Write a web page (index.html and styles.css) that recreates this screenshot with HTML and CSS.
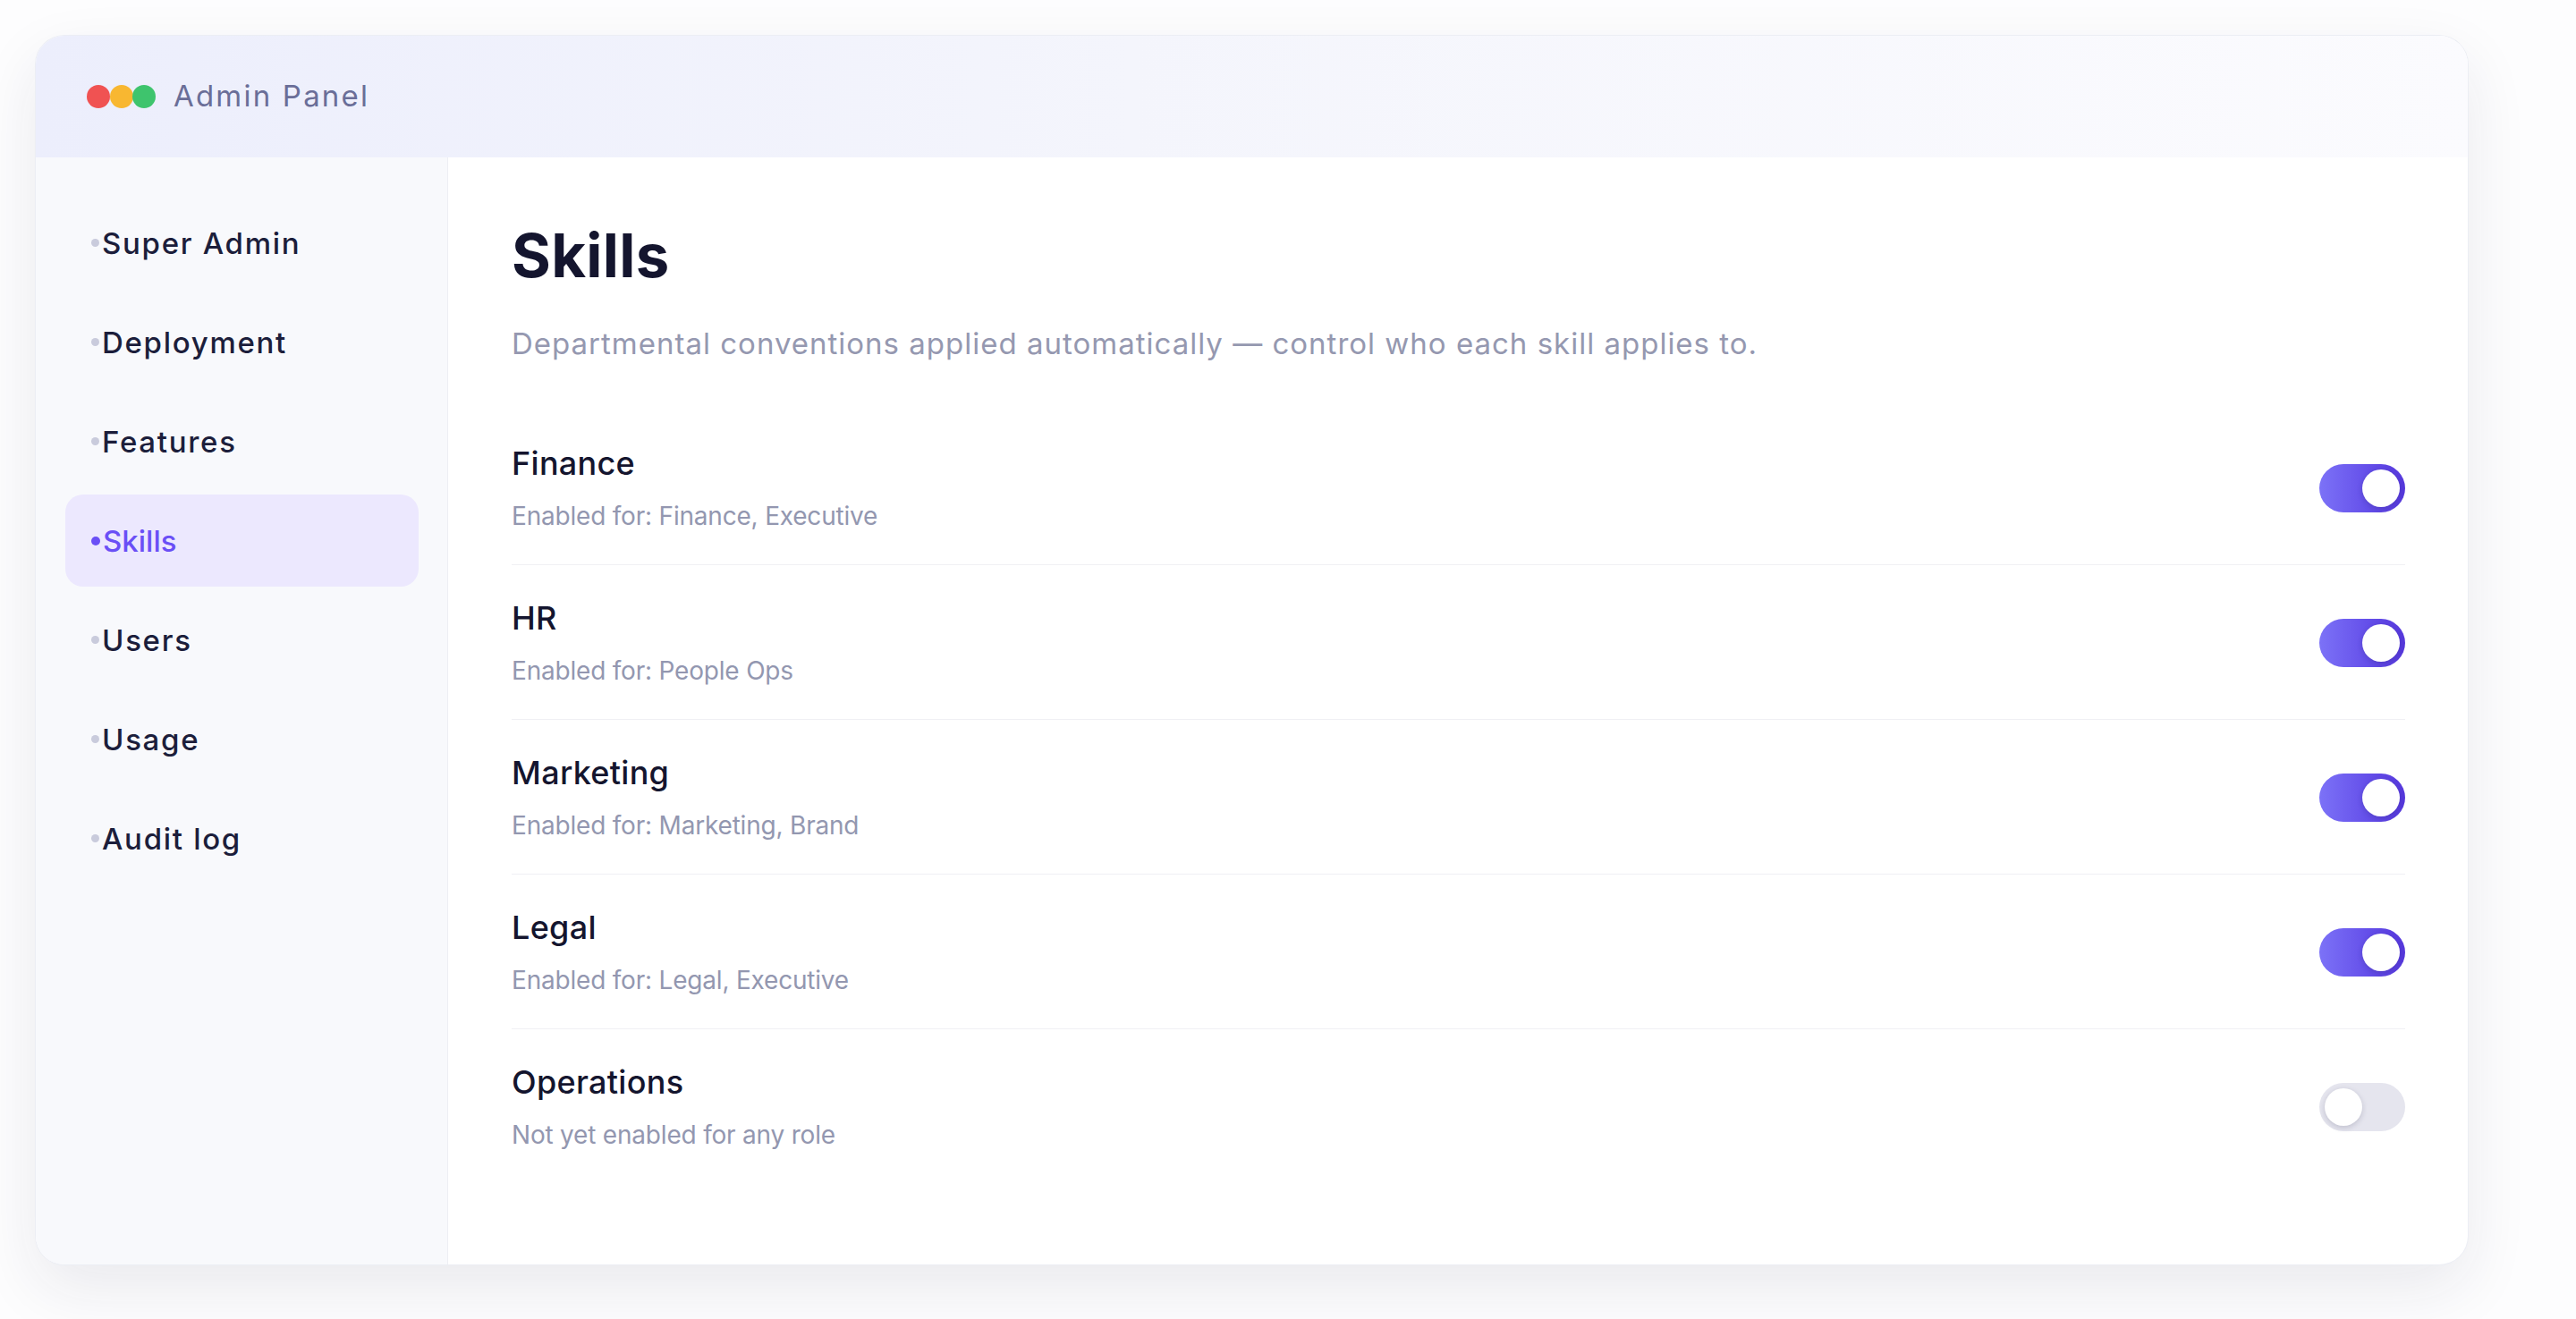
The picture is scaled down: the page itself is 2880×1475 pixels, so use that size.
FILE: index.html
```html
<!DOCTYPE html>
<html lang="en">
<head>
<meta charset="utf-8">
<title>Admin Panel – Skills</title>
<link rel="stylesheet" href="styles.css">
</head>
<body>
<div class="window">
  <header class="titlebar">
    <div class="lights">
      <span class="light red"></span>
      <span class="light yellow"></span>
      <span class="light green"></span>
    </div>
    <div class="app-name">Admin Panel</div>
  </header>
  <div class="body">
    <nav class="sidebar">
      <a class="nav-item"><span class="bullet"></span>Super Admin</a>
      <a class="nav-item"><span class="bullet"></span>Deployment</a>
      <a class="nav-item"><span class="bullet"></span>Features</a>
      <a class="nav-item active"><span class="bullet"></span>Skills</a>
      <a class="nav-item"><span class="bullet"></span>Users</a>
      <a class="nav-item"><span class="bullet"></span>Usage</a>
      <a class="nav-item"><span class="bullet"></span>Audit log</a>
    </nav>
    <main class="content">
      <h1 class="title">Skills</h1>
      <p class="subtitle">Departmental conventions applied automatically — control who each skill applies to.</p>
      <ul class="skills">
        <li class="skill">
          <div class="skill-text">
            <div class="skill-name">Finance</div>
            <div class="skill-desc">Enabled for: Finance, Executive</div>
          </div>
          <span class="toggle on"><span class="knob"></span></span>
        </li>
        <li class="skill">
          <div class="skill-text">
            <div class="skill-name">HR</div>
            <div class="skill-desc">Enabled for: People Ops</div>
          </div>
          <span class="toggle on"><span class="knob"></span></span>
        </li>
        <li class="skill">
          <div class="skill-text">
            <div class="skill-name">Marketing</div>
            <div class="skill-desc">Enabled for: Marketing, Brand</div>
          </div>
          <span class="toggle on"><span class="knob"></span></span>
        </li>
        <li class="skill">
          <div class="skill-text">
            <div class="skill-name">Legal</div>
            <div class="skill-desc">Enabled for: Legal, Executive</div>
          </div>
          <span class="toggle on"><span class="knob"></span></span>
        </li>
        <li class="skill">
          <div class="skill-text">
            <div class="skill-name">Operations</div>
            <div class="skill-desc">Not yet enabled for any role</div>
          </div>
          <span class="toggle off"><span class="knob"></span></span>
        </li>
      </ul>
    </main>
  </div>
</div>
</body>
</html>
```

FILE: styles.css
```css
* { box-sizing: border-box; }

html, body {
  margin: 0;
  padding: 0;
}

body {
  background: #fdfdfe;
  font-family: Inter, "Noto Sans", "Liberation Sans", sans-serif;
  width: 2880px;
  height: 1475px;
  overflow: hidden;
}

.window {
  margin: 40px 0 0 40px;
  width: 2719px;
  height: 1374px;
  border-radius: 32px;
  background: #ffffff;
  box-shadow: 0 0 0 1px #eceef4, 0 26px 70px rgba(28, 30, 70, 0.09);
  overflow: hidden;
  display: flex;
  flex-direction: column;
}

.titlebar {
  height: 136px;
  flex: 0 0 136px;
  display: flex;
  align-items: center;
  padding-left: 57px;
  gap: 20px;
  background: linear-gradient(90deg, #eceefc 0%, #f4f5fc 45%, #fbfbfe 100%);
}

.lights {
  display: flex;
  align-items: center;
}

.light {
  width: 26px;
  height: 26px;
  border-radius: 50%;
  display: block;
}
.light + .light { margin-left: -0.5px; }
.red { background: #f05252; }
.yellow { background: #f8b731; }
.green { background: #3ec46d; }

.app-name {
  font-size: 33px;
  font-weight: 400;
  color: #6a6e98;
  letter-spacing: 2.2px;
  margin-top: -3px;
}

.body {
  flex: 1;
  display: flex;
  min-height: 0;
}

.sidebar {
  width: 461px;
  flex: 0 0 461px;
  background: #f8f9fc;
  border-right: 1px solid #eeeff4;
  padding: 44px 32px 0 33px;
  display: flex;
  flex-direction: column;
  gap: 8px;
}

.nav-item {
  height: 103px;
  display: flex;
  align-items: center;
  padding-left: 29px;
  border-radius: 20px;
  font-size: 33px;
  font-weight: 500;
  color: #1c1e3b;
  letter-spacing: 1.7px;
  text-decoration: none;
}

.bullet {
  width: 9px;
  height: 9px;
  border-radius: 50%;
  background: #c9cbdc;
  margin-right: 3px;
  flex: 0 0 auto;
}

.nav-item.active {
  background: #ece8fe;
  color: #6a4ff6;
  letter-spacing: 0;
}
.nav-item.active .bullet {
  background: #6a4ff6;
  width: 10px;
  height: 10px;
}

.content {
  flex: 1;
  padding: 70px 70px 0 71px;
}

.title {
  margin: 0;
  font-size: 67px;
  line-height: 80px;
  font-weight: 700;
  color: #14152e;
  letter-spacing: 0.3px;
}

.subtitle {
  margin: 33px 0 0;
  font-size: 33px;
  line-height: 50px;
  color: #9598b0;
  letter-spacing: 1px;
}

.skills {
  list-style: none;
  margin: 50px 0 0;
  padding: 0;
}

.skill {
  display: flex;
  align-items: center;
  justify-content: space-between;
  padding: 34px 0 33px;
  border-bottom: 1px solid #f0f0f4;
}
.skill:last-child { border-bottom: none; }

.skill-name {
  font-size: 36px;
  line-height: 50px;
  font-weight: 500;
  color: #14152e;
  letter-spacing: 0.3px;
}

.skill-desc {
  margin-top: 13px;
  font-size: 28px;
  line-height: 42px;
  color: #9397b0;
  letter-spacing: -0.2px;
}

.toggle {
  position: relative;
  width: 96px;
  height: 54px;
  border-radius: 27px;
  flex: 0 0 auto;
}
.toggle.on {
  background: linear-gradient(90deg, #7c72f7 0%, #6550ea 55%, #5638dc 100%);
}
.toggle.off {
  background: #e5e5ee;
}

.knob {
  position: absolute;
  top: 6px;
  width: 42px;
  height: 42px;
  border-radius: 50%;
  background: #ffffff;
  box-shadow: 0 2px 6px rgba(20, 20, 60, 0.18);
}
.toggle.on .knob { left: 48px; }
.toggle.off .knob { left: 6px; }
```
